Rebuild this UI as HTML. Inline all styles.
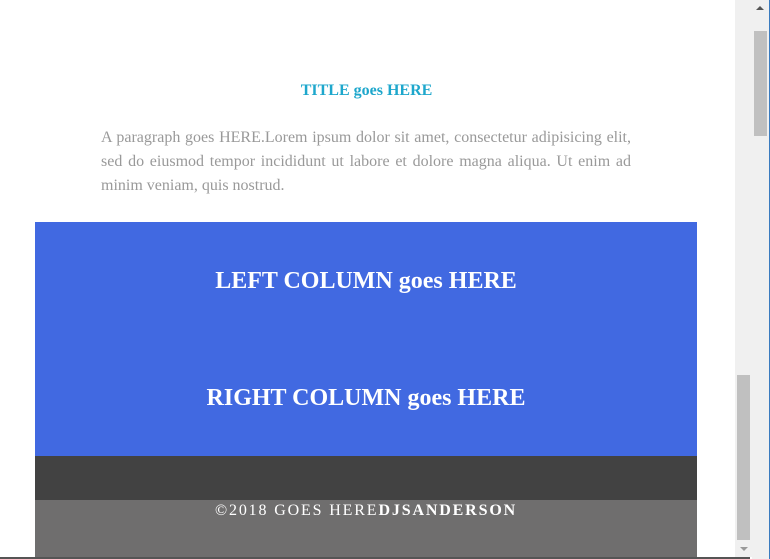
<!DOCTYPE html>
<html><head><style>
body{margin:0;width:770px;height:559px;overflow:hidden;background:#fff;font-family:"Liberation Serif",serif;position:relative}
.a{position:absolute}
</style></head><body>
<div class="a" style="left:0;top:82px;width:733px;text-align:center;color:#1ea7cc;font-weight:bold;font-size:16px">TITLE goes HERE</div>
<div class="a" style="left:101px;top:126px;width:530px;color:#999;font-size:16px;line-height:24px;text-align:justify">A paragraph goes HERE.Lorem ipsum dolor sit amet, consectetur adipisicing elit, sed do eiusmod tempor incididunt ut labore et dolore magna aliqua. Ut enim ad minim veniam, quis nostrud.</div>
<div class="a" style="left:35px;top:222px;width:662px;height:234px;background:#4169e1"></div>
<div class="a" style="left:35px;top:268px;width:662px;text-align:center;color:#fff;font-weight:bold;font-size:24px">LEFT COLUMN goes HERE</div>
<div class="a" style="left:35px;top:385px;width:662px;text-align:center;color:#fff;font-weight:bold;font-size:24px">RIGHT COLUMN goes HERE</div>
<div class="a" style="left:35px;top:456px;width:662px;height:44px;background:#424242"></div>
<div class="a" style="left:35px;top:500px;width:662px;height:59px;background:#6f6e6e"></div>
<div class="a" style="left:35px;top:502px;width:662px;text-align:center;color:#fff;font-size:16px;letter-spacing:1.85px">©2018 GOES HERE<b>DJSANDERSON</b></div>
<div class="a" style="left:0;top:557px;width:750px;height:2px;background:#555"></div>
<div class="a" style="left:735px;top:0;width:18px;height:557px;background:#f0f0f0"></div>
<div class="a" style="left:737px;top:375px;width:13px;height:165px;background:#c0c0c0"></div>
<div class="a" style="left:740px;top:547px;width:0;height:0;border-left:4px solid transparent;border-right:4px solid transparent;border-top:4px solid #999"></div>
<div class="a" style="left:752px;top:0;width:17px;height:559px;background:#f0f0f0"></div>
<div class="a" style="left:754px;top:31px;width:13px;height:105px;background:#c0c0c0"></div>
<div class="a" style="left:756px;top:6px;width:0;height:0;border-left:4px solid transparent;border-right:4px solid transparent;border-bottom:4px solid #555"></div>
<div class="a" style="left:769px;top:0;width:1px;height:559px;background:#3a7bbf"></div>
</body></html>
